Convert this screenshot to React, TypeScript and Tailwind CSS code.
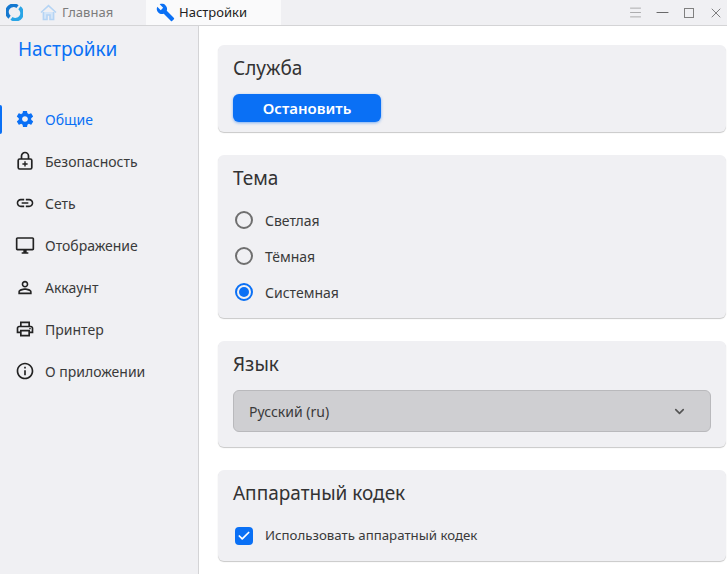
import { Check, ChevronDown, Menu, Minus, X } from 'lucide-react'
import { IoMdSettings } from 'react-icons/io'
import { MdBuild, MdInfoOutline, MdLink, MdOutlineDesktopWindows, MdOutlinePrint, MdPersonOutline } from 'react-icons/md'

const LockPlus = () => (
  <svg width="20" height="20" viewBox="0 0 20 20" fill="none" stroke="currentColor" strokeWidth="1.7">
    <path d="M6.5 8V5a3.5 3.5 0 0 1 7 0V8" />
    <rect x="3.2" y="8" width="13.6" height="10" rx="1.4" />
    <path d="M10 10.3v5.2M7.4 13h5.2" strokeWidth="1.4" />
  </svg>
)

const Logo = () => (
  <svg width="17" height="17" viewBox="0 0 17 17" fill="none" strokeWidth="3.6">
    <path d="M3.6 13.2A6.6 6.6 0 0 1 11.5 2.6" stroke="#1478d0" />
    <path d="M13.4 3.8A6.6 6.6 0 0 1 5.5 14.4" stroke="#2aa5e6" />
  </svg>
)

// pale house with a window cut out, as on the inactive home tab
const HomeIcon = () => (
  <svg width="17" height="17" viewBox="0 0 17 17" fill="none" stroke="#b5d4f4">
    <path d="M1 8.5L8.5 1.6 16 8.5" strokeWidth="1.6" />
    <path d="M3.4 8v7.5h3.6v-4.5h3v4.5h3.6V8" strokeWidth="1.6" fill="#d5e6f8" />
  </svg>
)

const NAV = [
  { label: 'Общие', icon: <IoMdSettings size={20} />, active: true },
  { label: 'Безопасность', icon: <LockPlus /> },
  { label: 'Сеть', icon: <MdLink size={20} /> },
  { label: 'Отображение', icon: <MdOutlineDesktopWindows size={21} /> },
  { label: 'Аккаунт', icon: <MdPersonOutline size={21} /> },
  { label: 'Принтер', icon: <MdOutlinePrint size={20} /> },
  { label: 'О приложении', icon: <MdInfoOutline size={20} /> },
]

function Card({ title, className, children }: { title: string; className: string; children: React.ReactNode }) {
  return (
    <section className={`rounded-md bg-[#f0f0f3] px-[15px] shadow-[0_1px_1px_rgba(0,0,0,0.22)] ${className}`}>
      <h2 className="pt-[8px] text-[19px] leading-[30px] text-[#333]">{title}</h2>
      {children}
    </section>
  )
}

function Radio({ label, checked }: { label: string; checked?: boolean }) {
  return (
    <div className="flex h-9 items-center gap-[12px] text-[14px] text-[#3a3a3a]">
      <span className={`flex size-[18px] items-center justify-center rounded-full border-2 ${checked ? 'border-[#0a70f5]' : 'border-[#6f6f6f]'}`}>
        {checked && <span className="size-[10px] rounded-full bg-[#0a70f5]" />}
      </span>
      {label}
    </div>
  )
}

export default function App() {
  return (
    <div className="flex h-[574px] w-[727px] flex-col overflow-hidden bg-white font-['Noto_Sans',sans-serif]">
      <header className="flex h-[26px] shrink-0 items-center border-b border-[#d4d4d6] bg-[#f0f0f3]">
        <div className="flex w-[40px] justify-center pr-[11px]"><Logo /></div>
        <div className="flex w-[106px] items-center gap-[5px] text-[13px] text-[#7c7c7c]">
          <HomeIcon />
          Главная
        </div>
        <div className="flex h-full w-[135px] items-center gap-[4px] bg-[#fafafb] pl-[10px] text-[13px] text-[#222]">
          <MdBuild size={19} className="text-[#0a70f5]" />
          Настройки
        </div>
        <div className="ml-auto flex items-center gap-[13px] pr-[4px] text-[#777]">
          <span className="flex w-[14px] justify-center"><Menu size={15} strokeWidth={0.9} className="shrink-0" /></span>
          <span className="flex w-[14px] justify-center"><Minus size={19} strokeWidth={1} className="shrink-0 text-[#444]" /></span>
          <span className="flex w-[14px] justify-center"><span className="size-[10px] border-[1.5px] border-[#808080]" /></span>
          <span className="flex w-[14px] justify-center"><X size={16} strokeWidth={1} className="shrink-0 text-[#444]" /></span>
        </div>
      </header>

      <div className="flex min-h-0 flex-1">
        <aside className="w-[199px] shrink-0 border-r border-[#d4d4d6] bg-[#f0f0f3]">
          <h1 className="pl-[18px] pt-[8px] text-[19px] leading-[30px] text-[#0a70f5]">Настройки</h1>
          <nav className="mt-[34px] flex flex-col">
            {NAV.map(item => (
              <div
                key={item.label}
                className={`flex h-[42px] items-center gap-[10px] pl-[15px] text-[14px] ${item.active ? 'text-[#0a70f5]' : 'text-[#3a3a3a]'}`}
              >
                {item.active && <span className="ml-[-15px] mr-[3px] h-[29px] w-[2px] rounded-r bg-[#0a70f5]" />}
                <span className={`flex w-[20px] justify-center ${item.active ? 'text-[#0a70f5]' : 'text-[#222]'}`}>{item.icon}</span>
                {item.label}
              </div>
            ))}
          </nav>
        </aside>

        <main className="flex min-w-0 flex-1 flex-col pl-[19px] pr-px pt-[19px]">
          <Card title="Служба" className="h-[87px] shrink-0">
            <button className="mt-[11px] h-[28px] w-[148px] rounded-md bg-[#0a70f5] text-[15px] font-semibold text-white shadow-[0_1px_3px_rgba(10,112,245,0.5)]">
              Остановить
            </button>
          </Card>

          <Card title="Тема" className="mt-[23px] h-[163px] shrink-0">
            <div className="mt-[9px] flex flex-col pl-[2px]">
              <Radio label="Светлая" />
              <Radio label="Тёмная" />
              <Radio label="Системная" checked />
            </div>
          </Card>

          <Card title="Язык" className="mt-[23px] h-[106px] shrink-0">
            <div className="mt-[11px] flex h-[42px] items-center justify-between rounded-md border border-[#b9b9bc] bg-[#cfcfd2] pl-[15px] pr-[23px] text-[14px] text-[#3a3a3a]">
              Русский (ru)
              <ChevronDown size={15} strokeWidth={2.6} className="text-[#555]" />
            </div>
          </Card>

          <Card title="Аппаратный кодек" className="mt-[23px] h-[91px] shrink-0">
            <div className="mt-[18px] flex items-center gap-[12px] pl-[2px] text-[13.25px] text-[#3a3a3a]">
              <span className="flex size-[18px] items-center justify-center rounded-[4px] bg-[#0a70f5]">
                <Check size={14} strokeWidth={3} className="text-white" />
              </span>
              Использовать аппаратный кодек
            </div>
          </Card>
        </main>
      </div>
    </div>
  )
}
